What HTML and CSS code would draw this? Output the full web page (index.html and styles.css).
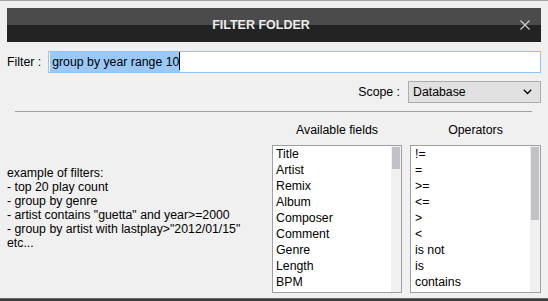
FILE: index.html
```html
<!DOCTYPE html>
<html lang="en">
<head>
  <meta charset="UTF-8">
  <meta name="viewport" content="width=device-width, initial-scale=1">
  <title>Filter Folder</title>
  <link rel="stylesheet" href="styles.css">
</head>
<body>
  <div class="dialog">
    <div class="title-bar">
      <div class="title">FILTER FOLDER</div>
      <div class="close">
        <svg width="10" height="10" viewBox="0 0 10 10">
          <path d="M0.5 0.5 L9.5 9.5 M9.5 0.5 L0.5 9.5" stroke="#c8c8c8" stroke-width="1.3" fill="none"/>
        </svg>
      </div>
    </div>

    <div class="filter-row">
      <span class="label">Filter :</span>
      <div class="text-input"><span class="selected">group by year range 10</span><span class="caret"></span></div>
    </div>

    <div class="scope-row">
      <span class="label">Scope :</span>
      <div class="select">
        <span>Database</span>
        <svg width="9" height="6" viewBox="0 0 9 6">
          <path d="M0.8 0.8 L4.5 4.5 L8.2 0.8" stroke="#000" stroke-width="1.3" fill="none"/>
        </svg>
      </div>
    </div>

    <div class="separator"></div>

    <div class="lower">
      <div class="examples">
        example of filters:<br>
        - top 20 play count<br>
        - group by genre<br>
        - artist contains "guetta" and year&gt;=2000<br>
        - group by artist with lastplay&gt;"2012/01/15"<br>
        etc...
      </div>

      <div class="column">
        <div class="col-head">Available fields</div>
        <div class="listbox">
          <ul class="items">
            <li>Title</li>
            <li>Artist</li>
            <li>Remix</li>
            <li>Album</li>
            <li>Composer</li>
            <li>Comment</li>
            <li>Genre</li>
            <li>Length</li>
            <li>BPM</li>
          </ul>
          <div class="scrollbar"><div class="thumb thumb-short"></div></div>
        </div>
      </div>

      <div class="column">
        <div class="col-head">Operators</div>
        <div class="listbox">
          <ul class="items">
            <li>!=</li>
            <li>=</li>
            <li>&gt;=</li>
            <li>&lt;=</li>
            <li>&gt;</li>
            <li>&lt;</li>
            <li>is not</li>
            <li>is</li>
            <li>contains</li>
          </ul>
          <div class="scrollbar"><div class="thumb thumb-long"></div></div>
        </div>
      </div>
    </div>
  </div>
  <div class="bottom-edge"></div>
</body>
</html>
```

FILE: styles.css
```css
body {
  margin: 0;
  height: 301px;
  overflow: hidden;
  background-color: #f0f0f0;
  border-top: 1px solid #a3a3a3;
  box-sizing: border-box;
  font-family: "Liberation Sans", Arial, sans-serif;
  font-size: 12.3px;
  color: #000;
  display: flex;
  flex-direction: column;
}

.dialog {
  padding: 7px 7px 0 7px;
  flex: 1;
}

.title-bar {
  height: 34px;
  display: flex;
  align-items: center;
  background: linear-gradient(to bottom, #4b4b4b 0, #4b4b4b 17px, #232323 17px, #232323 100%);
}

.title {
  flex: 1;
  text-align: center;
  color: #ececec;
  font-weight: bold;
  font-size: 12.5px;
}

.close {
  width: 26px;
  display: flex;
  padding-left: 5px;
  box-sizing: border-box;
}

.close svg {
  display: block;
}

.filter-row {
  display: flex;
  align-items: center;
  gap: 7px;
  margin-top: 9px;
}

.text-input {
  flex: 1;
  height: 22px;
  box-sizing: border-box;
  border: 1px solid #90c6f5;
  background: #fff;
  padding-left: 1px;
  display: flex;
  align-items: center;
}

.selected {
  display: inline-block;
  height: 20px;
  line-height: 20px;
  padding-left: 2px;
  padding-right: 1px;
  background: #99c9f8;
}

.caret {
  display: inline-block;
  width: 1px;
  height: 18px;
  background: #000;
  margin-left: -1px;
  margin-top: -2px;
}

.scope-row {
  display: flex;
  justify-content: flex-end;
  align-items: center;
  gap: 8px;
  margin-top: 8px;
}

.select {
  width: 133px;
  height: 22px;
  box-sizing: border-box;
  border: 1px solid #adadad;
  background: #e1e1e1;
  display: flex;
  align-items: center;
  justify-content: space-between;
  padding: 0 8px 0 4px;
}

.select svg {
  display: block;
}

.separator {
  height: 1px;
  background: #a0a0a0;
  margin: 8px 9px 0 8px;
}

.lower {
  display: flex;
  gap: 8px;
  margin-top: 11px;
}

.examples {
  flex: 1;
  align-self: center;
  line-height: 14px;
}

.column {
  width: 130px;
}

.column:last-child {
  width: 131px;
}

.col-head {
  height: 14px;
  line-height: 14px;
  text-align: center;
  margin-bottom: 8px;
}

.listbox {
  height: 148px;
  box-sizing: border-box;
  border: 1px solid #a0a0a0;
  background: #fff;
  display: flex;
}

.items {
  flex: 1;
  list-style: none;
  margin: 0;
  padding: 0 0 0 3px;
  overflow: hidden;
}

.items li {
  height: 16px;
  line-height: 16px;
}

.column:last-child .items {
  padding-left: 4px;
}

.scrollbar {
  width: 10px;
  background: #f0f0f0;
  padding: 1px;
  box-sizing: border-box;
}

.thumb {
  background: #c2c2c6;
}

.thumb-short {
  height: 22px;
}

.thumb-long {
  height: 73px;
}

.bottom-edge {
  height: 2px;
  background: #3a3a3a;
  border-top: 1px solid #6a6a6a;
}
```
